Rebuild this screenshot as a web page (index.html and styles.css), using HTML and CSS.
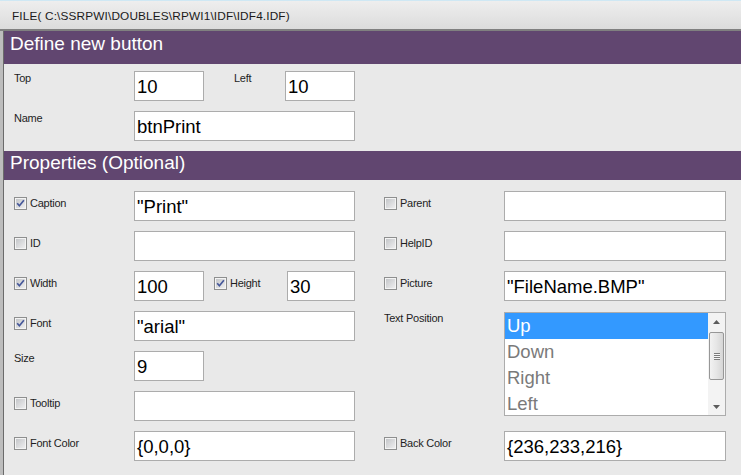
FILE: index.html
```html
<!DOCTYPE html>
<html>
<head>
<meta charset="utf-8">
<link rel="stylesheet" href="styles.css">
</head>
<body>
<div class="titlebar">FILE( C:\SSRPWI\DOUBLES\RPWI1\IDF\IDF4.IDF)</div>
<div class="frame">
  <div class="panel">
    <div class="hdr hdr1">Define new button</div>
    <div class="sec sec1">
      <div class="lbl">Top</div>
      <div class="pair">
        <div class="in small">10</div>
        <div class="lbl left-lbl">Left</div>
        <div class="in small">10</div>
      </div>
      <div class="lbl">Name</div>
      <div class="in">btnPrint</div>
    </div>

    <div class="hdr hdr2">Properties (Optional)</div>
    <div class="sec sec2">
      <div class="ck"><span class="cb"><span class="cbi"><svg viewBox="0 0 9 9" width="9" height="9"><path d="M1.2 4.3 L3.4 6.8 L7.9 1.3" fill="none" stroke="#45579a" stroke-width="1.7"/></svg></span></span><span>Caption</span></div>
      <div class="in">"Print"</div>
      <div class="ck right"><span class="cb"><span class="cbi"></span></span><span>Parent</span></div>
      <div class="in">&nbsp;</div>

      <div class="ck"><span class="cb"><span class="cbi"></span></span><span>ID</span></div>
      <div class="in">&nbsp;</div>
      <div class="ck right"><span class="cb"><span class="cbi"></span></span><span>HelpID</span></div>
      <div class="in">&nbsp;</div>

      <div class="ck"><span class="cb"><span class="cbi"><svg viewBox="0 0 9 9" width="9" height="9"><path d="M1.2 4.3 L3.4 6.8 L7.9 1.3" fill="none" stroke="#45579a" stroke-width="1.7"/></svg></span></span><span>Width</span></div>
      <div class="pair">
        <div class="in small">100</div>
        <div class="ck inline"><span class="cb"><span class="cbi"><svg viewBox="0 0 9 9" width="9" height="9"><path d="M1.2 4.3 L3.4 6.8 L7.9 1.3" fill="none" stroke="#45579a" stroke-width="1.7"/></svg></span></span><span>Height</span></div>
        <div class="in small end">30</div>
      </div>
      <div class="ck right"><span class="cb"><span class="cbi"></span></span><span>Picture</span></div>
      <div class="in">"FileName.BMP"</div>

      <div class="ck"><span class="cb"><span class="cbi"><svg viewBox="0 0 9 9" width="9" height="9"><path d="M1.2 4.3 L3.4 6.8 L7.9 1.3" fill="none" stroke="#45579a" stroke-width="1.7"/></svg></span></span><span>Font</span></div>
      <div class="in">"arial"</div>
      <div class="lbl right tp-label">Text Position</div>
      <div class="listbox">
        <div class="items">
          <div class="item sel">Up</div>
          <div class="item">Down</div>
          <div class="item">Right</div>
          <div class="item">Left</div>
        </div>
        <div class="sb">
          <div class="sb-btn"><svg width="7" height="4" viewBox="0 0 7 4"><path d="M0 4 L3.5 0 L7 4Z" fill="#5c5c5c"/></svg></div>
          <div class="thumb"><div class="grip"></div></div>
          <div class="sb-fill"></div>
          <div class="sb-btn"><svg width="7" height="4" viewBox="0 0 7 4"><path d="M0 0 L3.5 4 L7 0Z" fill="#5c5c5c"/></svg></div>
        </div>
      </div>

      <div class="lbl">Size</div>
      <div class="pair"><div class="in small">9</div></div>

      <div class="ck"><span class="cb"><span class="cbi"></span></span><span>Tooltip</span></div>
      <div class="in">&nbsp;</div>

      <div class="ck"><span class="cb"><span class="cbi"></span></span><span>Font Color</span></div>
      <div class="in">{0,0,0}</div>
      <div class="ck right"><span class="cb"><span class="cbi"></span></span><span>Back Color</span></div>
      <div class="in">{236,233,216}</div>
    </div>
  </div>
</div>
</body>
</html>
```

FILE: styles.css
```css
html, body {
  margin: 0;
  padding: 0;
  background: #e9e9e9;
  font-family: "Liberation Sans", Arial, sans-serif;
  overflow: hidden;
}

.titlebar {
  box-sizing: border-box;
  height: 31px;
  border-top: 1px solid #cfe8f4;
  border-bottom: 2px solid #808080;
  background: linear-gradient(#eeeeee, #dcdcdc);
  font-size: 11.8px;
  letter-spacing: 0.15px;
  line-height: 13px;
  padding: 9px 0 0 12px;
  color: #1a1a1a;
  white-space: nowrap;
}

.frame {
  border-left: 3px solid #bdbdbd;
}

.panel {
  border-left: 1px solid #6b6b6b;
  background: #e9e9e9;
  min-height: calc(100vh - 31px);
}

.hdr {
  box-sizing: border-box;
  background: #614670;
  color: #ffffff;
  font-size: 19px;
  line-height: 22px;
  padding-left: 6px;
  white-space: nowrap;
}
.hdr1 { height: 33px; padding-top: 2px; }
.hdr2 { height: 29px; padding-top: 1px; }

.sec {
  display: grid;
  grid-auto-rows: 30px;
  row-gap: 10px;
  padding-left: 10px;
}
.sec1 {
  grid-template-columns: 120px 221px;
  padding-top: 7px;
  padding-bottom: 10px;
}
.sec2 {
  grid-template-columns: 120px 221px 149px 222px;
  padding-top: 11px;
}

.lbl {
  font-size: 11px;
  letter-spacing: -0.25px;
  line-height: 12px;
  margin-top: 1px;
  color: #1e1e1e;
  white-space: nowrap;
}
.left-lbl {
  width: 51px;
  margin-left: 30px;
}

.right { padding-left: 29px; }

.pair {
  display: flex;
  align-items: flex-start;
}

.in {
  box-sizing: border-box;
  height: 30px;
  border: 1px solid #acacac;
  background: #ffffff;
  font-size: 18.5px;
  line-height: 21px;
  padding: 4px 2px 0 2px;
  color: #000;
  white-space: nowrap;
  overflow: hidden;
}
.in.small { width: 70px; }
.in.small.end { width: 68px; margin-left: auto; }

.ck {
  display: flex;
  align-items: center;
  gap: 3px;
  height: 13px;
  margin-top: 6px;
  font-size: 11px;
  letter-spacing: -0.25px;
  line-height: 13px;
  color: #1e1e1e;
  white-space: nowrap;
  align-self: start;
}
.ck.inline { margin-left: 10px; }

.cb {
  box-sizing: border-box;
  width: 13px;
  height: 13px;
  flex: none;
  border: 1px solid #8e8f8f;
  background: #f4f4f4;
  padding: 1px;
}
.cbi {
  display: block;
  width: 9px;
  height: 9px;
  background: linear-gradient(135deg, #c4c6c9, #eeeeef);
}
.cbi svg { display: block; overflow: visible; }

.tp-label {
  grid-column: 3;
  grid-row: 4 / span 3;
  align-self: start;
}

.listbox {
  grid-column: 4;
  grid-row: 4 / span 3;
  align-self: start;
  box-sizing: border-box;
  width: 222px;
  height: 104px;
  margin-top: 1px;
  border: 1px solid #acacac;
  background: #ffffff;
  display: flex;
  overflow: hidden;
}
.items {
  flex: 1;
  overflow: hidden;
}
.item {
  height: 26px;
  line-height: 26px;
  font-size: 18.5px;
  padding-left: 2px;
  color: #7a7a7a;
  white-space: nowrap;
}
.item.sel {
  background: #3399ff;
  color: #ffffff;
}

.sb {
  width: 17px;
  flex: none;
  background: #f3f3f3;
  display: flex;
  flex-direction: column;
  align-items: center;
}
.sb-btn {
  height: 17px;
  width: 17px;
  display: flex;
  align-items: center;
  justify-content: center;
  flex: none;
}
.sb-btn svg { display: block; }
.thumb {
  box-sizing: border-box;
  width: 15px;
  height: 48px;
  margin-top: 2px;
  flex: none;
  border: 1px solid #979797;
  border-radius: 2px;
  background: linear-gradient(to right, #f2f2f2, #e6e6e6 50%, #d6d6d6);
  display: flex;
  align-items: center;
  justify-content: center;
}
.grip {
  width: 6px;
  height: 7px;
  background: repeating-linear-gradient(#7c7c7c 0 1px, #f6f6f6 1px 2px);
}
.sb-fill { flex: 1; }
```
